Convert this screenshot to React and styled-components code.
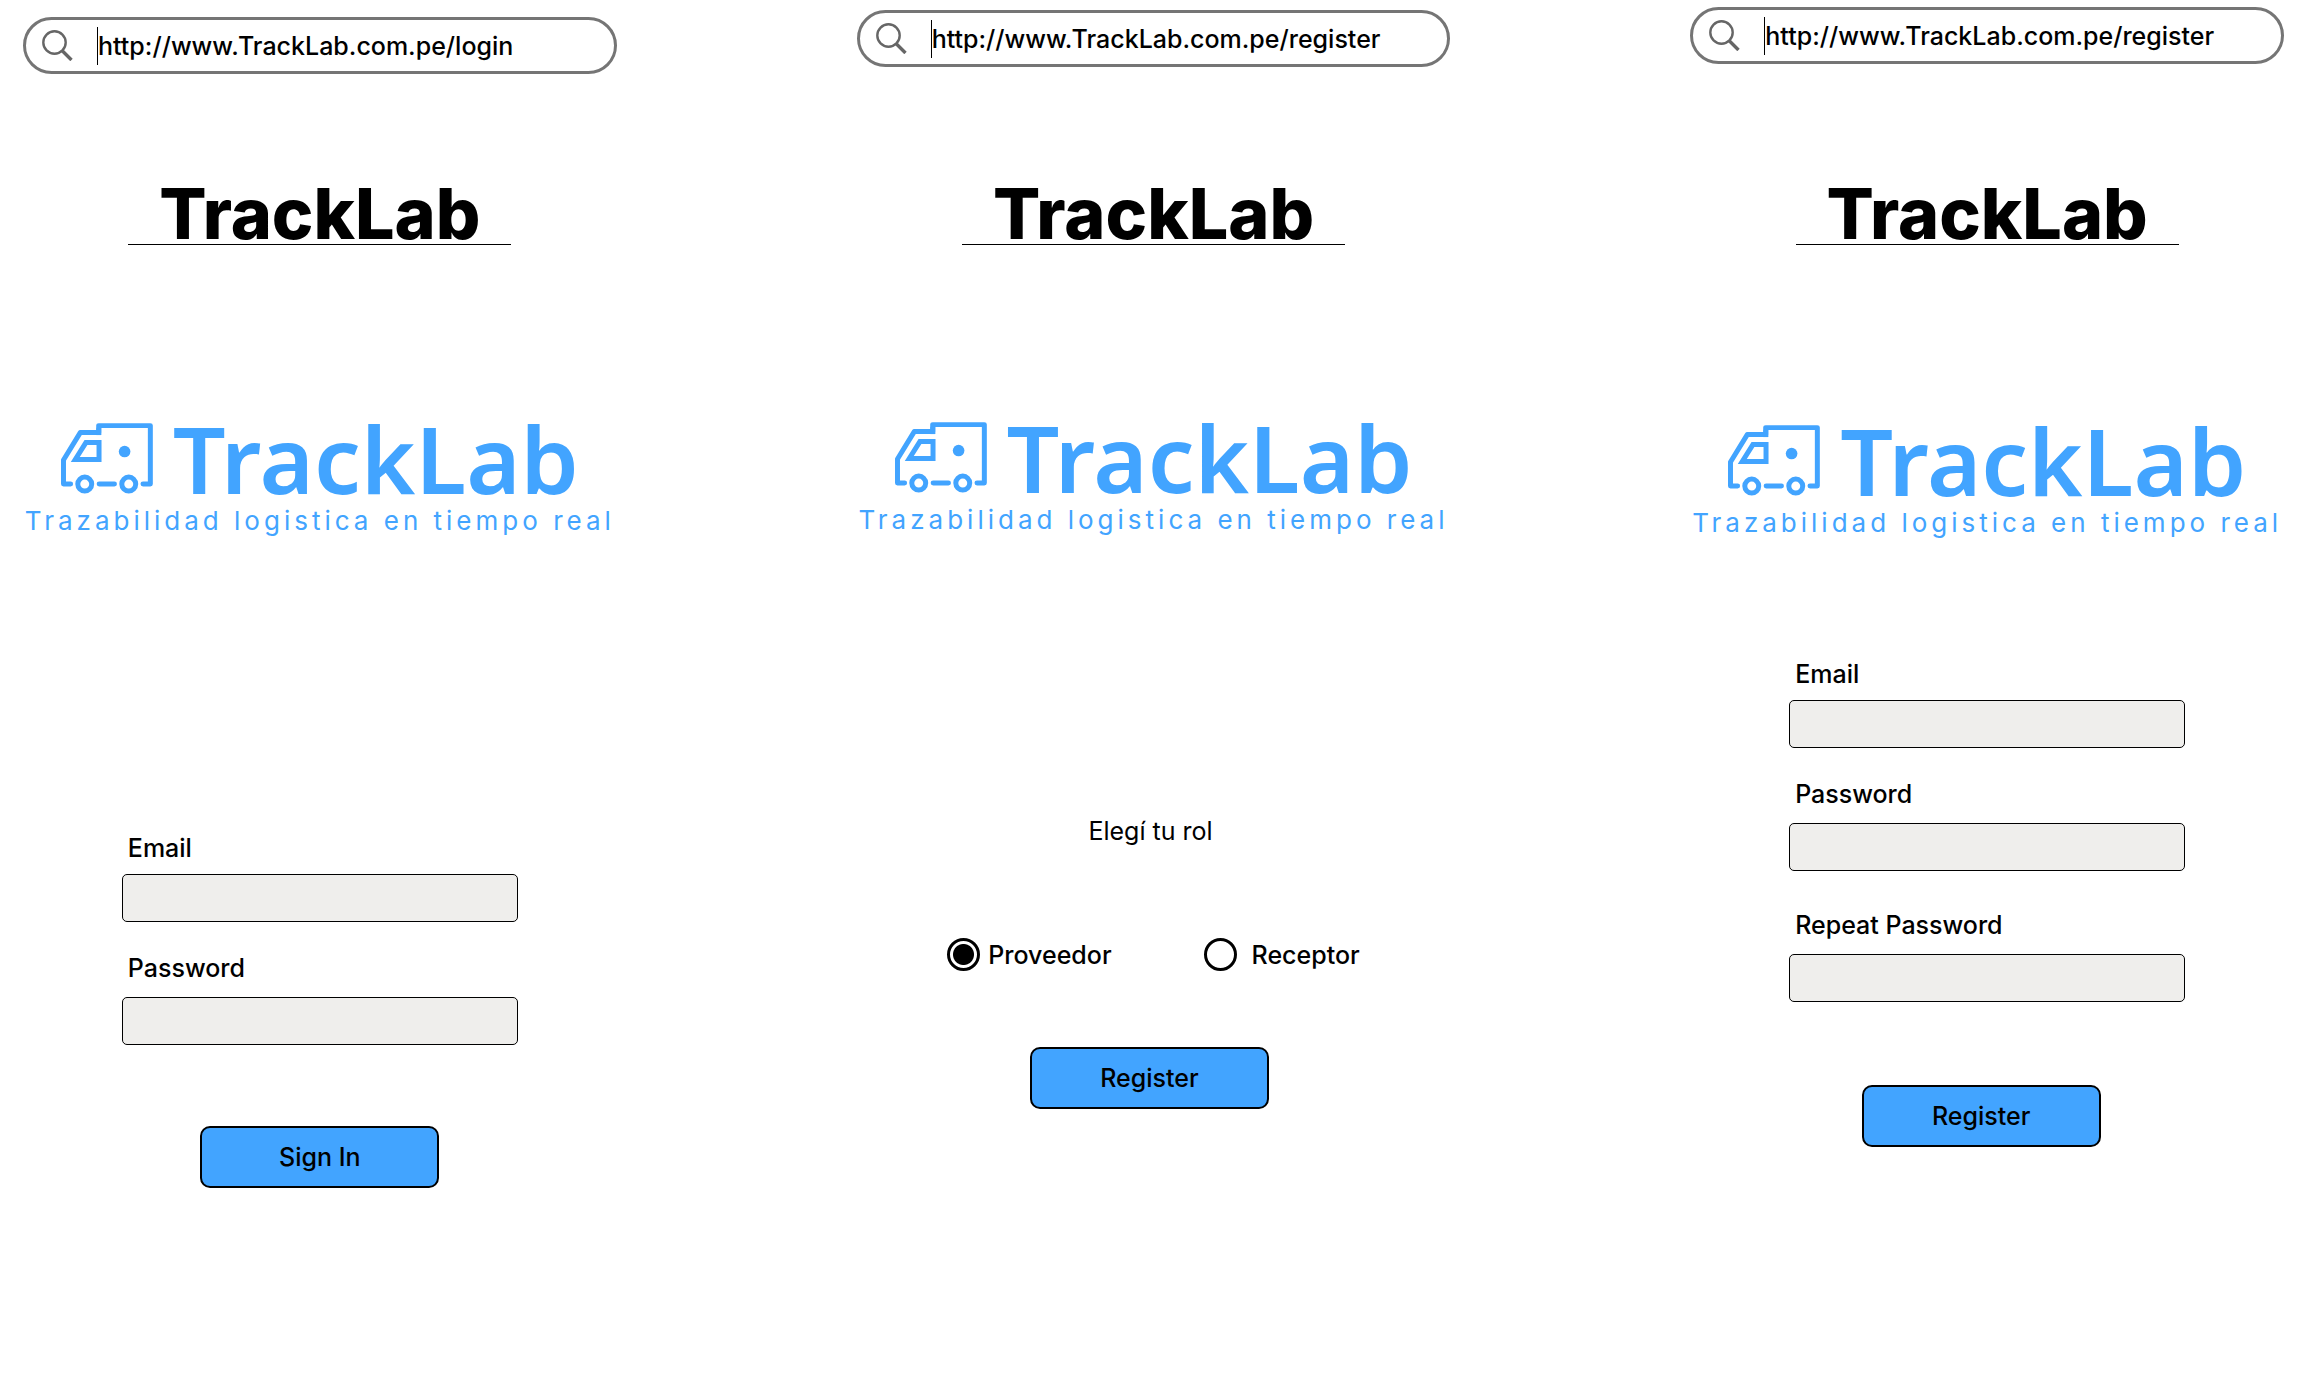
import React, { useId, useState } from "react";
import styled, { createGlobalStyle } from "styled-components";

const BLUE = "#42a4ff";

const GlobalStyle = createGlobalStyle`
  *, *::before, *::after { box-sizing: border-box; }
  body {
    margin: 0;
    background: #fff;
    color: #000;
    font-family: Inter, "Liberation Sans", sans-serif;
    font-size: 25px;
    font-weight: 500;
    line-height: 30px;
  }
`;

const Board = styled.main`
  display: grid;
  grid-template-columns: repeat(3, minmax(0, 1fr));
  column-gap: 194px;
  min-height: 100vh;

  @media (max-width: 1900px) {
    column-gap: 24px;
  }
  @media (max-width: 1200px) {
    grid-template-columns: minmax(0, 1fr);
    row-gap: 96px;
  }
`;

const Screen = styled.section`
  display: flex;
  flex-direction: column;
  align-items: center;
`;

const BrowserArea = styled.header`
  width: 100%;
  height: 184px;
  padding: ${({ $top }) => $top}px 23px 0;
`;

const AddressBar = styled.label`
  display: flex;
  align-items: center;
  gap: 24px;
  width: 100%;
  max-width: 594px;
  height: 57px;
  margin: 0 auto;
  padding: 0 28px 0 16px;
  border: 3px solid #757575;
  border-radius: 29px;
`;

const AddressInput = styled.input`
  flex: 1;
  min-width: 0;
  height: 38px;
  padding: 0;
  border: 0;
  border-left: 1px solid #000;
  outline: none;
  background: transparent;
  color: inherit;
  font: inherit;
`;

const Title = styled.h1`
  width: 383px;
  margin: 0;
  border-bottom: 1px solid #000;
  font-size: 70px;
  font-weight: 800;
  line-height: 60px;
  text-align: center;
`;

const Logo = styled.div`
  display: flex;
  flex-direction: column;
  align-items: center;
  gap: 11px;
  margin-top: ${({ $top }) => $top}px;
  color: ${BLUE};
`;

const LogoRow = styled.div`
  display: flex;
  align-items: center;
  gap: 20px;
`;

const Wordmark = styled.span`
  font-family: "Noto Sans", "Open Sans", sans-serif;
  font-size: 93px;
  font-weight: 600;
  line-height: 72px;
`;

const Tagline = styled.p`
  margin: 0;
  font-size: 26px;
  font-weight: 400;
  line-height: 32px;
  letter-spacing: 4px;
  white-space: nowrap;
`;

const Form = styled.form`
  display: flex;
  flex-direction: column;
  align-items: center;
  width: 100%;
  max-width: 396px;
  margin-top: ${({ $top }) => $top}px;
`;

const FieldBox = styled.div`
  display: flex;
  flex-direction: column;
  gap: ${({ $gap }) => $gap}px;
  width: 100%;
  margin-top: ${({ $top }) => $top}px;
`;

const FieldLabel = styled.label`
  padding-left: 6px;
`;

const TextInput = styled.input`
  width: 100%;
  height: 48px;
  padding: 0 12px;
  border: 1px solid #000;
  border-radius: 5px;
  background: #efeeec;
  color: inherit;
  font: inherit;
`;

const Actions = styled.div`
  display: flex;
  justify-content: center;
  width: 100%;
  margin-top: ${({ $top }) => $top}px;
  padding-right: ${({ $inset = 0 }) => $inset}px;
`;

const Button = styled.button`
  width: 239px;
  height: 62px;
  border: 2px solid #000;
  border-radius: 10px;
  background: ${BLUE};
  color: inherit;
  font: inherit;
  cursor: pointer;
`;

const Roles = styled.fieldset`
  display: flex;
  flex-direction: column;
  align-items: center;
  min-width: 0;
  margin: 0;
  padding: 0;
  border: 0;
`;

const RolesLegend = styled.legend`
  padding: 0 6px 0 0;
  margin: 0 auto 92px;
  font-weight: 400;
`;

const RoleRow = styled.div`
  display: flex;
  gap: 92px;
`;

const RoleOption = styled.label`
  display: flex;
  align-items: center;
  gap: ${({ $gap }) => $gap}px;
  cursor: pointer;
`;

const Radio = styled.input`
  appearance: none;
  flex: none;
  width: 33px;
  height: 33px;
  margin: 0;
  border: 3px solid #000;
  border-radius: 50%;
  background: #fff;

  &:checked {
    background: radial-gradient(circle, #000 0 10px, #fff 11px);
  }
`;

function SearchIcon() {
  return (
    <svg width="31" height="31" viewBox="0 0 31 31" fill="none" stroke="#666" aria-hidden="true">
      <circle cx="12.5" cy="12.5" r="11.2" strokeWidth="2.4" />
      <path d="M20 20.5 29.5 30" strokeWidth="3.4" />
    </svg>
  );
}

function TruckIcon() {
  return (
    <svg width="92" height="71" viewBox="177 72 277 213" fill="none" stroke="currentColor" strokeWidth="15" strokeLinejoin="round" aria-hidden="true">
      <path d="M206 255H184.500V183L235 100.500H290.500V79.500H446V255H424" strokeLinecap="round" />
      <path d="M291 108V86" />
      <path d="M291.500 130.500V181.500H220L252 130.500Z" strokeLinejoin="miter" />
      <path d="M292 255H338" strokeLinecap="round" />
      <circle cx="248.500" cy="255.500" r="21" />
      <circle cx="381" cy="255.500" r="21" />
      <circle cx="368.500" cy="157.500" r="17.500" fill="currentColor" stroke="none" />
    </svg>
  );
}

function ScreenTop({ url, barTop, logoTop }) {
  return (
    <>
      <BrowserArea $top={barTop}>
        <AddressBar>
          <SearchIcon />
          <AddressInput type="text" aria-label="URL" defaultValue={url} />
        </AddressBar>
      </BrowserArea>
      <Title>TrackLab</Title>
      <Logo $top={logoTop}>
        <LogoRow>
          <TruckIcon />
          <Wordmark>TrackLab</Wordmark>
        </LogoRow>
        <Tagline>Trazabilidad logistica en tiempo real</Tagline>
      </Logo>
    </>
  );
}

function Field({ label, type, top = 0, gap = 14 }) {
  const id = useId();
  return (
    <FieldBox $top={top} $gap={gap}>
      <FieldLabel htmlFor={id}>{label}</FieldLabel>
      <TextInput id={id} type={type} />
    </FieldBox>
  );
}

const stop = (event) => event.preventDefault();

function LoginScreen() {
  return (
    <Screen>
      <ScreenTop url="http://www.TrackLab.com.pe/login" barTop={17} logoTop={177} />
      <Form $top={296} onSubmit={stop}>
        <Field label="Email" type="email" gap={11} />
        <Field label="Password" type="password" top={31} />
        <Actions $top={81}>
          <Button type="submit">Sign In</Button>
        </Actions>
      </Form>
    </Screen>
  );
}

function RoleScreen() {
  const [role, setRole] = useState("Proveedor");
  const options = [
    { name: "Proveedor", gap: 8 },
    { name: "Receptor", gap: 15 },
  ];
  return (
    <Screen>
      <ScreenTop url="http://www.TrackLab.com.pe/register" barTop={10} logoTop={176} />
      <Form $top={280} onSubmit={stop}>
        <Roles>
          <RolesLegend>Elegí tu rol</RolesLegend>
          <RoleRow>
            {options.map(({ name, gap }) => (
              <RoleOption key={name} $gap={gap}>
                <Radio type="radio" name="role" value={name} checked={role === name} onChange={() => setRole(name)} />
                {name}
              </RoleOption>
            ))}
          </RoleRow>
        </Roles>
        <Actions $top={76} $inset={8}>
          <Button type="submit">Register</Button>
        </Actions>
      </Form>
    </Screen>
  );
}

function RegisterScreen() {
  return (
    <Screen>
      <ScreenTop url="http://www.TrackLab.com.pe/register" barTop={7} logoTop={179} />
      <Form $top={120} onSubmit={stop}>
        <Field label="Email" type="email" gap={11} />
        <Field label="Password" type="password" top={31} />
        <Field label="Repeat Password" type="password" top={39} />
        <Actions $top={83} $inset={12}>
          <Button type="submit">Register</Button>
        </Actions>
      </Form>
    </Screen>
  );
}

export default function App() {
  return (
    <>
      <GlobalStyle />
      <Board>
        <LoginScreen />
        <RoleScreen />
        <RegisterScreen />
      </Board>
    </>
  );
}
